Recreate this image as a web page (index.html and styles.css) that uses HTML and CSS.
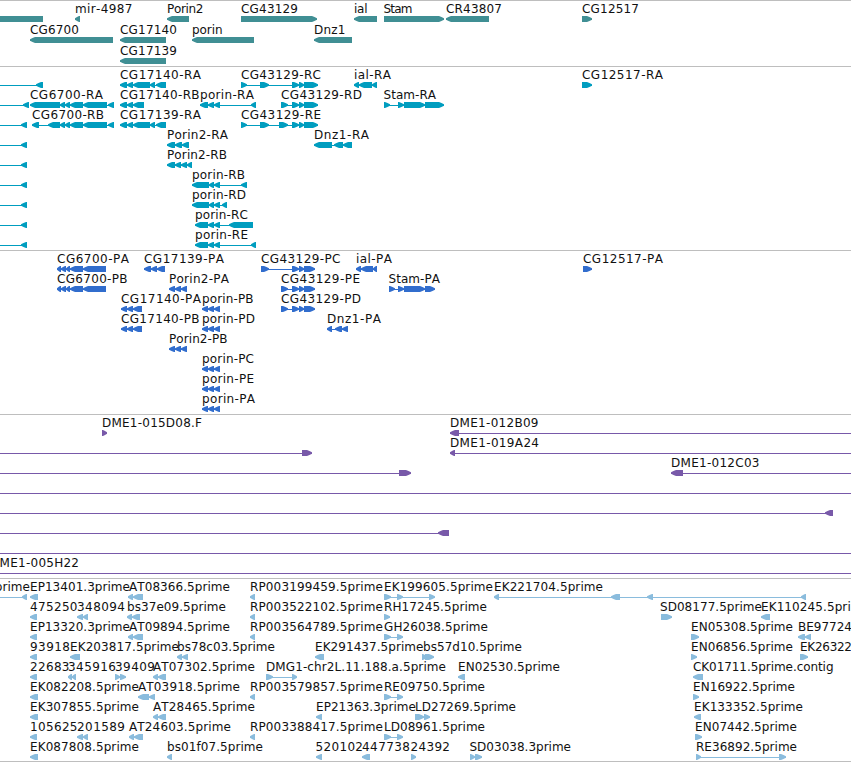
FILE: index.html
```html
<!DOCTYPE html>
<html lang="en">
<head>
  <meta charset="UTF-8">
  <title>Genome Browser</title>
  <link rel="stylesheet" href="styles.css">
</head>
<body>
  <main class="browser">
    <section class="track genes" id="genes"></section>
    <section class="track transcripts" id="transcripts"></section>
    <section class="track proteins" id="proteins"></section>
    <section class="track clones" id="clones"></section>
    <section class="track ests" id="ests"></section>
  </main>
  <script src="tracks.js"></script>
</body>
</html>
```
FILE: styles.css
```css
body {
    margin: 0;
    background: #fff;
}
.browser {
    display: flex;
    flex-direction: column;
    width: 851px;
    border-bottom: 1px solid #bebebe;
}
.track {
    border-top: 1px solid #bebebe;
    overflow: hidden;
}
.track svg {
    display: block;
    width: 100%;
    height: 100%;
}
.track text {
    font-family: "DejaVu Sans", sans-serif;
    font-size: 12px;
    font-kerning: none;
    fill: #111;
}
.genes {
    height: 65px;
    fill: #408f94;
}
.transcripts {
    height: 183px;
    fill: #009dbf;
}
.proteins {
    height: 163px;
    fill: #316dcd;
}
.clones {
    height: 163px;
    fill: #7859a9;
}
.ests {
    height: 182px;
    fill: #8abcdd;
}
```
FILE: tracks.js
```js
const NS = 'http://www.w3.org/2000/svg';
const L = -1;
const R = 1;

// feature: [label, label start, label end, strand, [block start, block end, ...]]
const upstream = ['', 0, 0, L, [-10, -9, 21, 27]];
const through = ['', 0, 0, L, [-10, -9, 860, 861]];
const cg6700p = [57, 61, 61, 66, 66, 70, 70, 83, 83, 106];
const cg17139r = [120, 127, 127, 133, 133, 150, 150, 155, 156, 166];
const cg17140p = [121, 127, 127, 133, 133, 142];
const cg43129p = [281, 288, 292, 299, 299, 304, 304, 315];
const porin2p = [169, 175, 175, 181, 181, 187];
const porinp = [202, 208, 208, 214, 214, 220];

const tracks = {
    genes: [
        [
            ['', 0, 0, L, [-10, 43]],
            ['mir-4987', 75, 132.5, L, [75, 80]],
            ['Porin2', 167, 203.5, L, [167, 189]],
            ['CG43129', 241, 298, R, [241, 317]],
            ['ial', 354, 367.5, L, [354, 377]],
            ['Stam', 383.5, 412.5, R, [384, 444]],
            ['CR43807', 446, 502, L, [446, 489]],
            ['CG12517', 582, 639, R, [582, 592]]
        ],
        [
            ['CG6700', 30, 79, L, [30, 113]],
            ['CG17140', 120, 177, L, [120, 166]],
            ['porin', 192, 222.5, L, [192, 254]],
            ['Dnz1', 314, 345.5, L, [314, 352]]
        ],
        [
            ['CG17139', 120, 177, L, [120, 166]]
        ]
    ],
    transcripts: [
        [
            ['', 0, 0, L, [-10, -9, 36, 43]],
            ['CG17140-RA', 120, 201, L, cg17139r],
            ['CG43129-RC', 241, 321, R, [241, 247, 260, 269, 292, 299, 299, 304, 304, 318]],
            ['ial-RA', 354, 391, L, [354, 359, 359, 372, 372, 377]],
            ['CG12517-RA', 582, 663, R, [582, 592]]
        ],
        [
            ['', 0, 0, L, [-10, -9, 23, 29]],
            ['CG6700-RA', 30, 103, L, [30, 60, 60, 65, 65, 70, 70, 83, 83, 107, 108, 114]],
            ['CG17140-RB', 120, 199.5, L, [120, 127, 127, 133, 133, 144]],
            ['porin-RA', 200, 254, L, [200, 208, 208, 214, 214, 220, 251, 256]],
            ['CG43129-RD', 281, 362, R, [281, 288, 292, 299, 299, 304, 304, 318]],
            ['Stam-RA', 383.5, 436, R, [384, 390, 398, 404, 404, 425, 425, 444]]
        ],
        [
            upstream,
            ['CG6700-RB', 32, 104, L, [32, 39, 48, 60, 60, 65, 65, 70, 70, 83, 83, 107, 108, 114]],
            ['CG17139-RA', 120, 201, L, cg17139r],
            ['CG43129-RE', 241, 321, R, [241, 247, 260, 269, 279, 288, 292, 299, 299, 304, 304, 318]]
        ],
        [
            upstream,
            ['Porin2-RA', 167, 228, L, [167, 175, 175, 182, 182, 189]],
            ['Dnz1-RA', 314, 369, L, [314, 332, 334, 343, 343, 352]]
        ],
        [
            upstream,
            ['Porin2-RB', 167, 227, L, [167, 175, 175, 181, 181, 187, 187, 192]]
        ],
        [
            upstream,
            ['porin-RB', 192, 245, L, [192, 209, 209, 214, 214, 220, 241, 247]]
        ],
        [
            upstream,
            ['porin-RD', 192, 246, L, [192, 209, 209, 214, 214, 220, 222, 227]]
        ],
        [
            upstream,
            ['porin-RC', 195, 248, L, [195, 208, 208, 214, 214, 220, 229, 253]]
        ],
        [
            upstream,
            ['porin-RE', 195, 248, L, [195, 208, 208, 214, 214, 220, 251, 256]]
        ]
    ],
    proteins: [
        [
            ['CG6700-PA', 57, 129, L, cg6700p],
            ['CG17139-PA', 144, 224, L, [144, 151, 151, 157, 157, 165]],
            ['CG43129-PC', 261, 340.5, R, [261, 269, 292, 299, 299, 304, 304, 315]],
            ['ial-PA', 356, 392, L, [356, 361, 361, 373, 373, 377]],
            ['CG12517-PA', 583, 663, R, [583, 592]]
        ],
        [
            ['CG6700-PB', 57, 127.5, L, cg6700p],
            ['Porin2-PA', 169, 229, L, porin2p],
            ['CG43129-PE', 281, 360, R, cg43129p],
            ['Stam-PA', 388.5, 440, R, [389, 395, 398, 404, 404, 425, 425, 435]]
        ],
        [
            ['CG17140-PA', 121, 201, L, cg17140p],
            ['porin-PB', 202, 253.5, L, porinp],
            ['CG43129-PD', 281, 361, R, cg43129p]
        ],
        [
            ['CG17140-PB', 121, 199.5, L, cg17140p],
            ['porin-PD', 202, 255, L, porinp],
            ['Dnz1-PA', 327, 381, L, [327, 332, 335, 342, 342, 348]]
        ],
        [['Porin2-PB', 169, 227.5, L, porin2p]],
        [['porin-PC', 202, 254, L, porinp]],
        [['porin-PE', 202, 254, L, porinp]],
        [['porin-PA', 202, 255, L, porinp]]
    ],
    clones: [
        [
            ['DME1-015D08.F', 102, 202, R, [102, 107]],
            ['DME1-012B09', 450, 538.5, L, [450, 459, 870, 880]]
        ],
        [
            ['', 0, 0, R, [-10, -9, 302, 312]],
            ['DME1-019A24', 450, 539, L, [450, 455, 870, 880]]
        ],
        [
            ['', 0, 0, R, [-10, -9, 399, 411]],
            ['DME1-012C03', 671, 759.5, L, [671, 683, 870, 880]]
        ],
        [through],
        [['', 0, 0, L, [-10, -9, 825, 833]]],
        [['', 0, 0, L, [-10, -9, 438, 449]]],
        [through],
        [['DME1-005H22', -10, 79, L, [-10, -9, 860, 861]]]
    ],
    ests: [
        [
            ['5prime', -13, 30, L, [-10, -9, 22, 27]],
            ['EP13401.3prime', 30, 130, L, [30, 38]],
            ['AT08366.5prime', 129, 230, L, [128, 133, 133, 143]],
            ['RP003199459.5prime', 250, 383, L, [250, 255]],
            ['EK199605.5prime', 384, 493, R, [384, 391, 397, 403, 429, 435]],
            ['EK221704.5prime', 494, 603, L, [494, 499, 611, 620, 647, 653, 801, 806]]
        ],
        [
            ['475250', 30, 77.5, L, [30, 37]],
            ['348094', 77, 125, L, [77, 83, 83, 88]],
            ['bs37e09.5prime', 127, 226, L, [127, 132, 132, 140]],
            ['RP003522102.5prime', 250, 383, L, [250, 255]],
            ['RH17245.5prime', 384, 487, R, [384, 390]],
            ['SD08177.5prime', 660, 762, R, [661, 672]],
            ['EK110245.5prime', 761, 870, L, [761, 770]]
        ],
        [
            ['EP13320.3prime', 30, 130, L, [30, 37]],
            ['AT09894.5prime', 129, 230, L, [128, 133, 133, 143]],
            ['RP003564789.5prime', 250, 383, L, [250, 255]],
            ['GH26038.5prime', 384, 488, R, [384, 391, 397, 403]],
            ['EN05308.5prime', 691, 793, R, [691, 699]],
            ['BE97724', 798, 852, L, [798, 805, 805, 811]]
        ],
        [
            ['93918', 30, 70, L, [30, 37]],
            ['EK203817.5prime', 70, 179, L, [70, 80]],
            ['bs78c03.5prime', 177, 275, L, [177, 182, 182, 188]],
            ['EK291437.5prime', 315, 423.5, L, [315, 324]],
            ['bs57d10.5prime', 423, 522, R, [422, 427, 425, 434]],
            ['EN06856.5prime', 691, 793, R, [691, 697]],
            ['EK26322', 800, 852, R, [800, 808]]
        ],
        [
            ['22683', 30, 69.5, L, [30, 37]],
            ['345916', 68, 116, L, [68, 72, 72, 76]],
            ['39409', 115, 155, R, [115, 120, 120, 126]],
            ['AT07302.5prime', 153, 255, L, [153, 158, 158, 166]],
            ['DMG1-chr2L.11.188.a.5prime', 266, 446, R, [266, 273, 292, 297]],
            ['EN02530.5prime', 458, 560, L, [458, 465]],
            ['CK01711.5prime.contig', 693, 833.5, L, [693, 703]]
        ],
        [
            ['EK082208.5prime', 30, 139, L, [30, 38]],
            ['AT03918.5prime', 138, 240, L, [138, 149, 149, 155]],
            ['RP003579857.5prime', 250, 383, L, [250, 255]],
            ['RE09750.5prime', 384, 485, R, [384, 391, 397, 403]],
            ['EN16922.5prime', 693, 795, R, [693, 699]]
        ],
        [
            ['EK307855.5prime', 30, 139, L, [30, 38]],
            ['AT28465.5prime', 153, 255, L, [153, 158, 158, 166]],
            ['EP21363.3prime', 316, 416, L, [316, 322]],
            ['LD27269.5prime', 415, 516, R, [415, 424, 424, 430]],
            ['EK133352.5prime', 694, 803, L, [694, 701]]
        ],
        [
            ['105625', 30, 77.5, L, [30, 37]],
            ['201589', 77, 125, L, [77, 83, 83, 88]],
            ['AT24603.5prime', 129, 231, L, [129, 134, 134, 143]],
            ['RP003388417.5prime', 250, 383, L, [250, 255]],
            ['LD08961.5prime', 384, 485, R, [384, 391, 397, 403]],
            ['EN07442.5prime', 695, 797, R, [695, 702]]
        ],
        [
            ['EK087808.5prime', 30, 139, L, [30, 38]],
            ['bs01f07.5prime', 167, 263, L, [167, 172]],
            ['520102', 315.5, 363, L, [316, 322]],
            ['447738', 362, 410, L, [362, 370]],
            ['24392', 410.5, 450, R, [411, 416]],
            ['SD03038.3prime', 469.5, 571, R, [470, 475, 475, 482]],
            ['RE36892.5prime', 696, 797, R, [696, 701, 779, 786]]
        ]
    ]
};

function add(parent, name, attrs) {
    const el = document.createElementNS(NS, name);
    for (const key in attrs) {
        el.setAttribute(key, attrs[key]);
    }
    parent.appendChild(el);
    return el;
}

// a block is 6px high and narrows to a point in the strand direction
function blockPath(start, end, strand, top) {
    const head = Math.min(end - start - 1, 5);
    const tail = strand === L ? end : start;
    const tip = strand === L ? start : end;
    const neck = tip - strand * head;
    const mid = tip - strand * head * 0.5;
    return `M${tail} ${top}H${neck}L${mid} ${top + 1}L${tip} ${top + 2.3}V${top + 3.7}L${mid} ${top + 5}L${neck} ${top + 6}H${tail}Z`;
}

for (const id in tracks) {
    const svg = add(document.getElementById(id), 'svg', {});
    const spacing = id === 'genes' ? 21 : 20;
    tracks[id].forEach((row, i) => {
        const top = 15 + i * spacing;
        row.forEach(([label, from, to, strand, blocks]) => {
            const start = blocks[0];
            const end = blocks[blocks.length - 1];
            add(svg, 'rect', { x: start, y: top + 3, width: end - start, height: 1 });
            for (let b = 0; b < blocks.length; b += 2) {
                // blocks that only carry the line off screen stay undrawn
                if (blocks[b + 1] - blocks[b] > 1) {
                    add(svg, 'path', { d: blockPath(blocks[b], blocks[b + 1], strand, top) });
                }
            }
            if (label) {
                const text = add(svg, 'text', { x: from, y: top - 3, textLength: to - from });
                text.textContent = label;
            }
        });
    });
}
```
